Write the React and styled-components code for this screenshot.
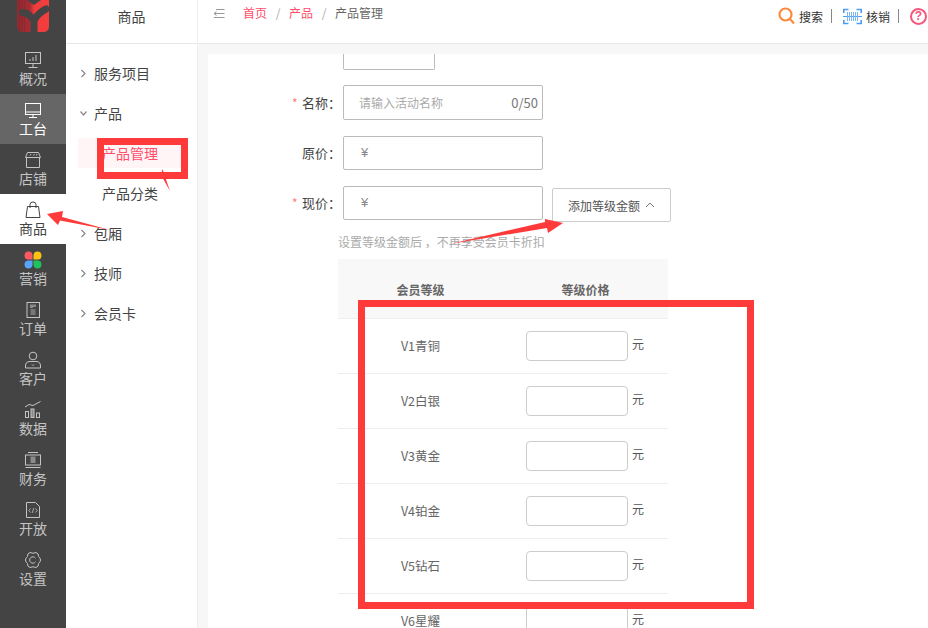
import React from 'react';
import styled, { createGlobalStyle } from 'styled-components';

const FONT = '"Noto Sans CJK SC", "Liberation Sans", sans-serif';
const RED = '#ff3a3a';

const GlobalStyle = createGlobalStyle`
  html, body {
    margin: 0;
    padding: 0;
    background: #fff;
  }
  body {
    font-family: ${FONT};
  }
  * {
    box-sizing: border-box;
  }
`;

const line = { fill: 'none', stroke: 'currentColor', strokeWidth: 1 };

const Logo = () => (
  <svg width="34" height="33" viewBox="0 0 34 33">
    <defs>
      <linearGradient id="stripes" x1="0" x2="1" y1="0" y2="0">
        <stop offset="0" stopColor="#8f2b31" />
        <stop offset="0.4" stopColor="#a52c33" />
        <stop offset="0.55" stopColor="#f23c3c" />
        <stop offset="1" stopColor="#f43d3d" />
      </linearGradient>
    </defs>
    <path d="M1 0H33V26Q33 32 27 32H7Q1 32 1 26Z" fill="url(#stripes)" />
    <path d="M3.500 0V31M6 0V31M8.500 0V31" stroke="#7a2529" strokeWidth="0.600" opacity="0.600" />
    <path d="M11 0H25L18 5Z" fill="#444" />
    <path d="M6.500 12.500Q13 13 18 20.500 22 13 30 9M18 20V33" fill="none" stroke="#444" strokeWidth="7" strokeLinecap="round" />
  </svg>
);

const icons = {
  overview: (
    <svg width="18" height="18" viewBox="0 0 18 18" {...line}>
      <rect x="1.500" y="1.500" width="15" height="11" />
      <path d="M9 13V16M4.500 16.500H13.500M6 10V8M9 10V6M12 10V4" />
    </svg>
  ),
  desk: (
    <svg width="18" height="18" viewBox="0 0 18 18" {...line}>
      <rect x="1.500" y="2.500" width="15" height="11" />
      <path d="M1.500 11H16.500M9 14V16.500M5 16.500H13" />
    </svg>
  ),
  store: (
    <svg width="18" height="18" viewBox="0 0 18 18" {...line}>
      <path d="M3.500 1.500H14.500L16.500 6.500H1.500Z" />
      <path d="M2.500 6.500V16.500H15.500V6.500M6 4.500L7 3M9.500 4.500L10.500 3M12.500 4.500L13 3" />
    </svg>
  ),
  goods: (
    <svg width="18" height="18" viewBox="0 0 18 18" {...line}>
      <path d="M3.500 5.500H14.500L16 16.500H2Z" />
      <path d="M6 7V3.500Q6 1 9 1 12 1 12 3.500V7" />
    </svg>
  ),
  marketing: (
    <svg width="18" height="18" viewBox="0 0 18 18">
      <path d="M8.500 8.500V4A4 4 0 1 0 4 8.500Z" fill="#fb5a63" />
      <path d="M9.500 8.500V4A4 4 0 1 1 14 8.500Z" fill="#fdc312" />
      <path d="M8.500 9.500V14A4 4 0 1 1 4 9.500Z" fill="#5aa2fa" />
      <path d="M9.500 9.500V14A4 4 0 1 0 14 9.500Z" fill="#1fc25c" />
    </svg>
  ),
  orders: (
    <svg width="18" height="18" viewBox="0 0 18 18">
      <rect x="3" y="1.500" width="12.500" height="15" fill="none" stroke="currentColor" />
      <path d="M6 3.500H12V6H9V7H6Z" fill="#8a8a8a" />
      <rect x="6.500" y="8" width="5" height="6" fill="#777" />
    </svg>
  ),
  customers: (
    <svg width="18" height="18" viewBox="0 0 18 18" {...line}>
      <circle cx="9" cy="5" r="3.800" />
      <path d="M1.500 17V15Q1.500 10.500 6 10.500H12Q16.500 10.500 16.500 15V17Z" />
      <path d="M8 13.500L9 14.500 10 13.500" />
    </svg>
  ),
  stats: (
    <svg width="18" height="18" viewBox="0 0 18 18" {...line}>
      <path d="M1 6L5 3.500 9 4.500 16.500 0.500" />
      <rect x="1.500" y="10.500" width="3" height="6" />
      <rect x="7" y="8" width="3" height="8.500" fill="#888" />
      <rect x="12.500" y="12" width="3" height="4.500" />
    </svg>
  ),
  finance: (
    <svg width="18" height="18" viewBox="0 0 18 18">
      <path d="M4 1.500H14M1.500 16.500H16.500" stroke="currentColor" fill="none" />
      <rect x="1.500" y="4" width="15" height="10" fill="none" stroke="currentColor" />
      <rect x="6.500" y="5.500" width="5" height="6.500" fill="#8a8a8a" />
    </svg>
  ),
  open: (
    <svg width="18" height="18" viewBox="0 0 18 18" {...line}>
      <path d="M2.500 1.500H11.500L15.500 5.500V16.500H2.500Z" />
      <path d="M6.500 7.500L4.800 9.500 6.500 11.500M11.500 7.500L13.200 9.500 11.500 11.500M9.800 7L8.200 12" strokeWidth="0.800" />
    </svg>
  ),
  settings: (
    <svg width="18" height="18" viewBox="0 0 18 18" {...line}>
      <path d="M6 1.500Q9 3 12 1.500 15 2.500 14.500 5.500 16.500 7 16.500 9 16.500 11 14.500 12.500 15 15.500 12 16.500 9 15 6 16.500 3 15.500 3.500 12.500 1.500 11 1.500 9 1.500 7 3.500 5.500 3 2.500 6 1.500Z" />
      <path d="M11.500 7.200A3.200 3.200 0 1 0 11.500 10.800" />
    </svg>
  ),
};

const navItems = [
  { key: 'overview', label: '概况' },
  { key: 'desk', label: '工台', state: 'hover' },
  { key: 'store', label: '店铺' },
  { key: 'goods', label: '商品', state: 'active' },
  { key: 'marketing', label: '营销' },
  { key: 'orders', label: '订单' },
  { key: 'customers', label: '客户' },
  { key: 'stats', label: '数据' },
  { key: 'finance', label: '财务' },
  { key: 'open', label: '开放' },
  { key: 'settings', label: '设置' },
];

const menu = [
  { label: '服务项目', arrow: 'right' },
  { label: '产品', arrow: 'down' },
  { label: '产品管理', sub: true, active: true },
  { label: '产品分类', sub: true },
  { label: '包厢', arrow: 'right' },
  { label: '技师', arrow: 'right' },
  { label: '会员卡', arrow: 'right' },
];

const levels = ['V1青铜', 'V2白银', 'V3黄金', 'V4铂金', 'V5钻石', 'V6星耀'];

const Arrow = ({ dir }) => (
  <svg width="7" height="9" viewBox="0 0 7 9" fill="none" stroke="#888" strokeWidth="1.200">
    <path d={dir === 'right' ? 'M1.500 1L5 4.500 1.500 8' : 'M0.500 2.500L3.500 6 6.500 2.500'} />
  </svg>
);

export default function App() {
  return (
    <Page>
      <GlobalStyle />
      <Sidebar>
        <LogoBox>
          <Logo />
        </LogoBox>
        {navItems.map((item) => (
          <NavItem key={item.key} $state={item.state}>
            <NavIcon>{icons[item.key]}</NavIcon>
            <NavLabel>{item.label}</NavLabel>
          </NavItem>
        ))}
      </Sidebar>

      <SubNav>
        <SubNavHead>商品</SubNavHead>
        <Menu>
          {menu.map((item) => (
            <MenuItem key={item.label} $sub={item.sub} $active={item.active}>
              {item.arrow && (
                <MenuArrow>
                  <Arrow dir={item.arrow} />
                </MenuArrow>
              )}
              {item.label}
            </MenuItem>
          ))}
        </Menu>
      </SubNav>

      <Content>
        <TopBar>
          <Crumbs>
            <BackIcon width="12" height="11" viewBox="0 0 12 11" fill="none" stroke="#999">
              <path d="M3 1.500H11.500M1 5.500H11.500M3.500 3.500L1 5.500 3.500 7.500M1 9.500H11.500" />
            </BackIcon>
            <CrumbLink>首页</CrumbLink>
            <CrumbSep>/</CrumbSep>
            <CrumbLink>产品</CrumbLink>
            <CrumbSep>/</CrumbSep>
            <CrumbCurrent>产品管理</CrumbCurrent>
          </Crumbs>
          <Tools>
            <svg width="17" height="18" viewBox="0 0 17 18" fill="none" stroke="#fb8a3c" strokeWidth="2.200">
              <circle cx="7.500" cy="7.500" r="6" />
              <path d="M12 12L16 16.500" />
            </svg>
            <ToolText>搜索</ToolText>
            <ToolSep />
            <svg width="19" height="17" viewBox="0 0 19 17" fill="none">
              <path d="M0.800 5V1.500H5.500M13.500 1.500H18.200V5M0.800 12V15.500H5.500M13.500 15.500H18.200V12" stroke="#4d9df2" strokeWidth="1.600" />
              <path d="M0 8.500H19" stroke="#4d9df2" />
              <path d="M4.500 4V13M6.500 4V13M8.500 4V13M10.500 4V13M12.500 4V13M14.500 4V13" stroke="#7ab5f5" />
            </svg>
            <ToolText>核销</ToolText>
            <ToolSep />
            <HelpIcon>?</HelpIcon>
          </Tools>
        </TopBar>

        <Main>
          <Card>
            <ClippedInput />
            <FormRow $gap={15} $height={35}>
              <FieldLabel $required>名称：</FieldLabel>
              <Field>
                <Placeholder>请输入活动名称</Placeholder>
                <Counter>0/50</Counter>
              </Field>
            </FormRow>
            <FormRow $gap={16} $height={34}>
              <FieldLabel>原价：</FieldLabel>
              <Field>
                <Currency>¥</Currency>
              </Field>
            </FormRow>
            <FormRow $gap={16} $height={34}>
              <FieldLabel $required>现价：</FieldLabel>
              <Field>
                <Currency>¥</Currency>
              </Field>
              <LevelButton>
                添加等级金额
                <svg width="10" height="6" viewBox="0 0 10 6" fill="none" stroke="#777">
                  <path d="M1 5L5 1 9 5" />
                </svg>
              </LevelButton>
            </FormRow>
            <Hint>设置等级金额后 ，不再享受会员卡折扣</Hint>
            <LevelTable>
              <TableHead>
                <HeadCell>会员等级</HeadCell>
                <HeadCell>等级价格</HeadCell>
              </TableHead>
              {levels.map((level) => (
                <TableRow key={level}>
                  <LevelName>{level}</LevelName>
                  <PriceCell>
                    <PriceInput />
                    <Unit>元</Unit>
                  </PriceCell>
                </TableRow>
              ))}
            </LevelTable>
          </Card>
        </Main>
      </Content>

      <RedBox $x={97} $y={138} $w={91} $h={41} />
      <RedBox $x={358} $y={300} $w={396} $h={309} />
      <Annotations width="928" height="628" viewBox="0 0 928 628">
        <polygon points="162,169 167,178 165.500,178 170,191 163,178.500 161.500,179" fill={RED} />
        <polygon points="47,214 63,211 62,217 110,230 60,220.500 58,225" fill={RED} />
        <polygon points="450,244 545,222 545,219 563,223 548,233 547,228" fill={RED} />
      </Annotations>
    </Page>
  );
}

const Page = styled.div`
  position: relative;
  display: flex;
  width: 928px;
  height: 628px;
  overflow: hidden;
  background: #fff;
`;

const Sidebar = styled.nav`
  flex: 0 0 66px;
  background: #444;
`;

const LogoBox = styled.div`
  display: flex;
  justify-content: center;
  height: 44px;
`;

const NavItem = styled.div`
  display: flex;
  flex-direction: column;
  align-items: center;
  height: 50px;
  padding-top: 7px;
  color: ${(p) => (p.$state === 'active' ? '#444' : p.$state === 'hover' ? '#fff' : '#c4c4c4')};
  background: ${(p) => (p.$state === 'active' ? '#fff' : p.$state === 'hover' ? '#666' : 'transparent')};
`;

const NavIcon = styled.div`
  display: flex;
  width: 18px;
  height: 18px;
`;

const NavLabel = styled.span`
  margin-top: -1px;
  font-size: 14px;
  line-height: 20px;
`;

const SubNav = styled.aside`
  flex: 0 0 132px;
  border-right: 1px solid #eee;
  background: #fff;
`;

const SubNavHead = styled.div`
  height: 44px;
  border-bottom: 1px solid #e8e8e8;
  font-size: 14px;
  line-height: 32px;
  text-align: center;
  color: #444;
`;

const Menu = styled.ul`
  margin: 0;
  padding: 9px 0 0;
  list-style: none;
`;

const MenuItem = styled.li`
  display: flex;
  align-items: center;
  height: ${(p) => (p.$active ? '30px' : '40px')};
  margin: ${(p) => (p.$active ? '5px 9px 5px 12px' : '0')};
  padding-left: ${(p) => (p.$active ? '24px' : p.$sub ? '36px' : '14px')};
  font-size: 14px;
  color: ${(p) => (p.$active ? '#ff4d6a' : '#444')};
  background: ${(p) => (p.$active ? '#fff5f6' : 'transparent')};
`;

const MenuArrow = styled.span`
  display: flex;
  width: 14px;
`;

const Content = styled.div`
  flex: 1;
  display: flex;
  flex-direction: column;
  min-width: 0;
`;

const TopBar = styled.header`
  display: flex;
  justify-content: space-between;
  flex: 0 0 44px;
  padding: 7px 1px 0 15px;
  border-bottom: 1px solid #e8e8e8;
  background: #fff;
`;

const Crumbs = styled.div`
  display: flex;
  align-items: center;
  height: 12px;
  font-size: 12px;
  line-height: 12px;
`;

const BackIcon = styled.svg`
  margin-right: 18px;
`;

const CrumbLink = styled.span`
  color: #ff4d6a;
`;

const CrumbSep = styled.span`
  width: 22px;
  text-align: center;
  color: #aaa;
`;

const CrumbCurrent = styled.span`
  color: #666;
`;

const Tools = styled.div`
  display: flex;
  align-items: center;
  height: 18px;
  gap: 4px;
`;

const ToolText = styled.span`
  font-size: 12px;
  color: #333;
`;

const ToolSep = styled.i`
  width: 1px;
  height: 14px;
  margin: 0 7px 0 4px;
  background: #888;
`;

const HelpIcon = styled.span`
  display: flex;
  align-items: center;
  justify-content: center;
  width: 17px;
  height: 17px;
  border: 2px solid #f5567a;
  border-radius: 50%;
  font-family: "Liberation Sans", sans-serif;
  font-size: 12px;
  font-weight: 700;
  color: #f5567a;
`;

const Main = styled.main`
  flex: 1;
  min-height: 0;
  padding: 10px 0 0 10px;
  background: #f7f7f7;
`;

const Card = styled.section`
  height: 100%;
  background: #fff;
`;

const ClippedInput = styled.div`
  width: 92px;
  height: 16px;
  margin-left: 135px;
  border: 1px solid #bbb;
  border-top: 0;
  border-radius: 0 0 2px 2px;
`;

const FormRow = styled.div`
  display: flex;
  align-items: flex-start;
  height: ${(p) => p.$height}px;
  margin-top: ${(p) => p.$gap}px;
  line-height: ${(p) => p.$height}px;
`;

const FieldLabel = styled.label`
  flex: 0 0 135px;
  padding-left: 94px;
  position: relative;
  font-size: 13px;
  color: #444;

  ${(p) =>
    p.$required &&
    `&::before {
      content: '*';
      position: absolute;
      left: 84px;
      color: #f77;
      font-size: 12px;
    }`}
`;

const Field = styled.div`
  display: flex;
  align-items: center;
  justify-content: space-between;
  width: 200px;
  height: 100%;
  padding: 0 4px 0 15px;
  border: 1px solid #bbb;
  border-radius: 2px;
  font-size: 12px;
`;

const Placeholder = styled.span`
  color: #aaa;
`;

const Counter = styled.span`
  color: #777;
  font-size: 13px;
`;

const Currency = styled.span`
  margin-left: 2px;
  font-family: "Liberation Sans", sans-serif;
  font-size: 13px;
  color: #888;
`;

const LevelButton = styled.button`
  display: flex;
  align-items: center;
  gap: 5px;
  width: 119px;
  height: 34px;
  margin: 2px 0 0 9px;
  padding: 0 0 0 15px;
  border: 1px solid #ccc;
  border-radius: 2px;
  background: #fff;
  font-family: ${FONT};
  font-size: 12px;
  color: #555;
`;

const Hint = styled.p`
  margin: 13px 0 0 130px;
  font-size: 12px;
  line-height: 18px;
  color: #aaa;
`;

const LevelTable = styled.div`
  width: 330px;
  margin: 8px 0 0 130px;
`;

const TableHead = styled.div`
  display: grid;
  grid-template-columns: 165px 165px;
  height: 60px;
  padding-top: 21px;
  border-bottom: 1px solid #eee;
  background: #f8f8f8;
`;

const HeadCell = styled.div`
  font-size: 12px;
  font-weight: 700;
  line-height: 20px;
  text-align: center;
  color: #666;
`;

const TableRow = styled.div`
  display: grid;
  grid-template-columns: 165px 165px;
  height: 55px;
  border-bottom: 1px solid #eee;
`;

const LevelName = styled.div`
  font-size: 12.5px;
  line-height: 53px;
  text-align: center;
  color: #666;
`;

const PriceCell = styled.div`
  display: flex;
  align-items: center;
  gap: 4px;
  padding-left: 23px;
`;

const PriceInput = styled.div`
  width: 102px;
  height: 30px;
  border: 1px solid #ccc;
  border-radius: 4px;
  background: #fff;
`;

const Unit = styled.span`
  margin-top: -6px;
  font-size: 12px;
  color: #555;
`;

const RedBox = styled.div`
  position: absolute;
  left: ${(p) => p.$x}px;
  top: ${(p) => p.$y}px;
  width: ${(p) => p.$w}px;
  height: ${(p) => p.$h}px;
  border: 7px solid ${RED};
`;

const Annotations = styled.svg`
  position: absolute;
  left: 0;
  top: 0;
  pointer-events: none;
`;
